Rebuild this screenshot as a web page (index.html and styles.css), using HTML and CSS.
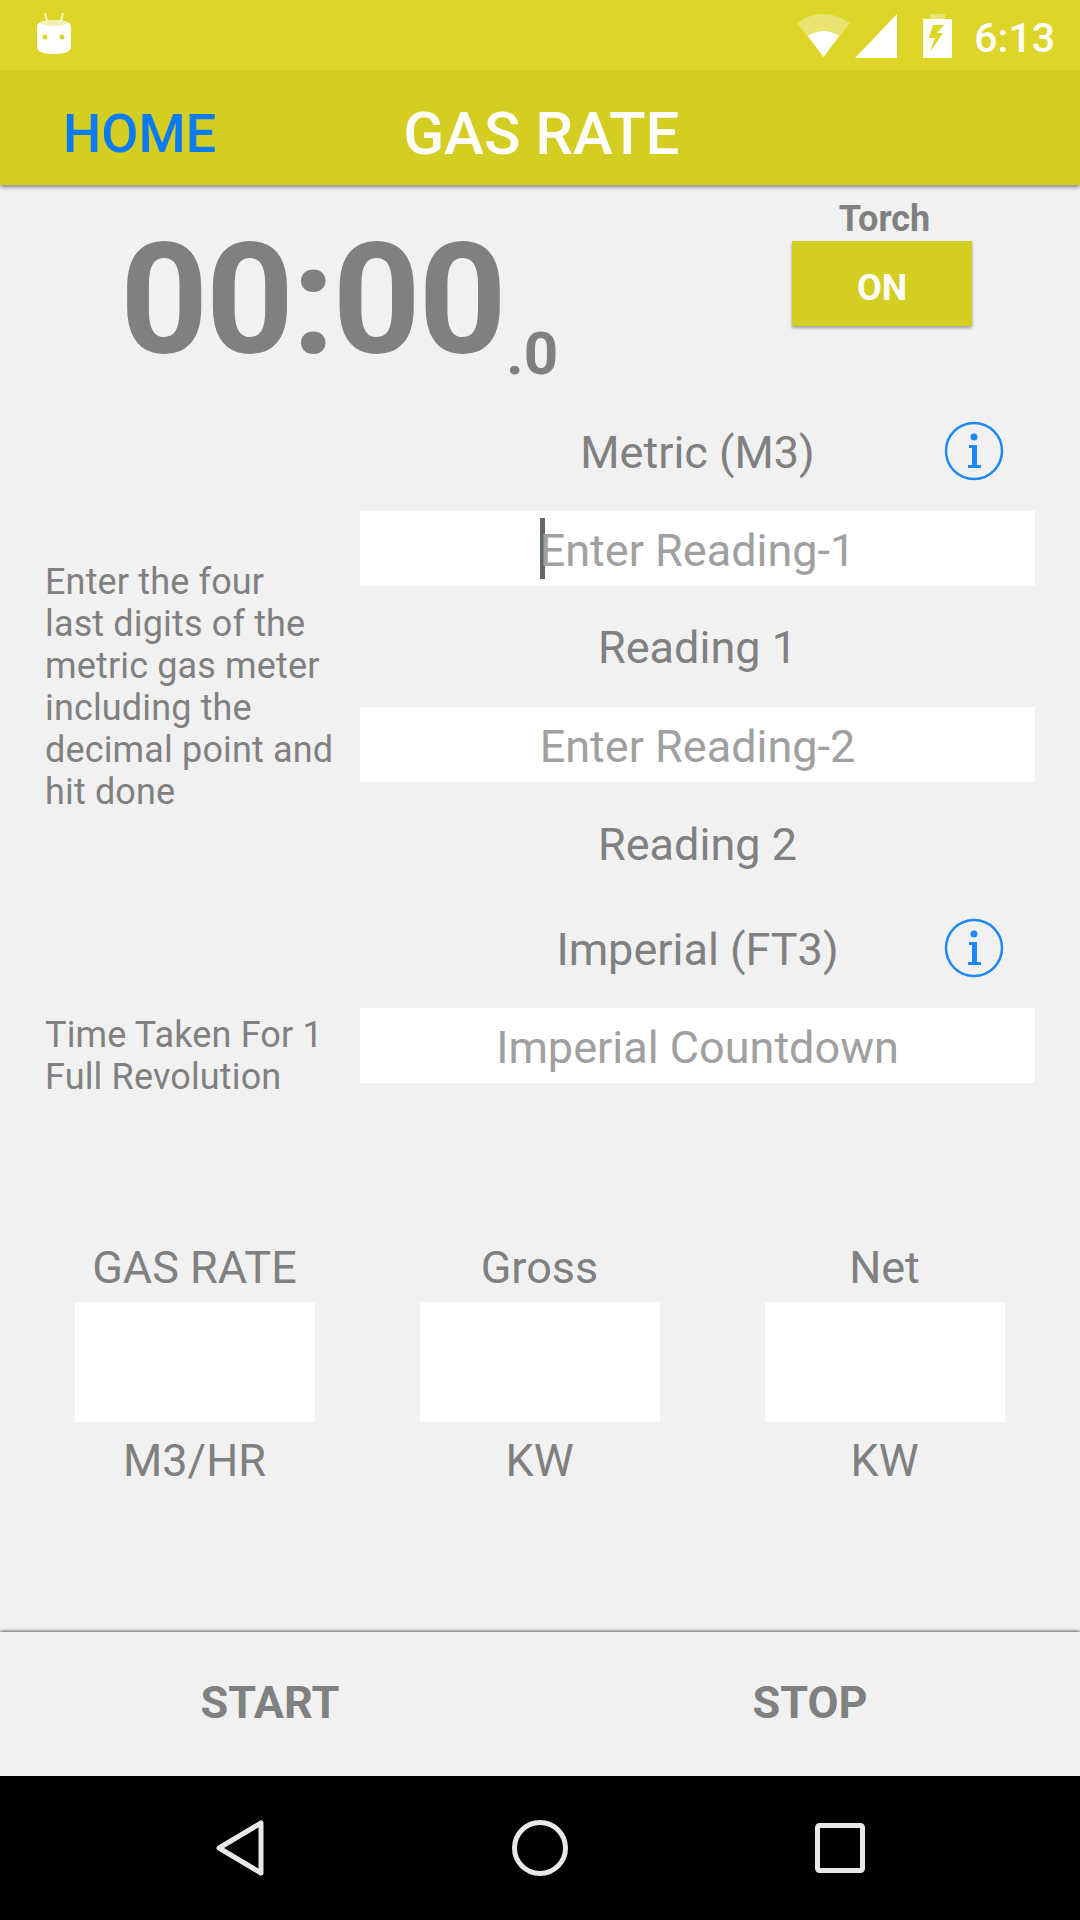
FILE: index.html
```html
<!DOCTYPE html>
<html lang="en">
<head>
    <meta charset="UTF-8">
    <meta name="viewport" content="width=device-width, initial-scale=1.0">
    <title>Gas Rate</title>
    <link rel="stylesheet" href="styles.css">
</head>
<body>

    <!-- Android status bar -->
    <div class="status-bar">
        <svg class="status-logo" width="34" height="42" viewBox="0 0 34 42">
            <path d="M10 8 L8 0 M24 8 L26 0" stroke="#f6f3c0" stroke-width="2" stroke-linecap="round"/>
            <path d="M0 14 Q0 7 17 7 Q34 7 34 14 V34 Q34 41 17 41 Q0 41 0 34 Z" fill="#fff"/>
            <path d="M3 10 Q8 7 17 7 Q26 7 31 10 Q26 13 17 13 Q8 13 3 10 Z" fill="#f3efb4"/>
            <circle cx="8" cy="24" r="2.5" fill="#ddd527"/>
            <circle cx="25" cy="24" r="2.5" fill="#ddd527"/>
        </svg>
        <div class="status-icons">
            <svg width="54" height="44" viewBox="0 0 54 44">
                <path d="M0 9 Q26.5 -9 53 9 L26.5 43 Z" fill="#fff" fill-opacity="0.35"/>
                <path d="M11 22 Q26.5 12 42 22 L26.5 43 Z" fill="#fff"/>
            </svg>
            <svg width="42" height="44" viewBox="0 0 42 44">
                <path d="M0 44 H42 V0 Z" fill="#fff"/>
            </svg>
            <svg class="status-battery" width="29" height="44" viewBox="0 0 29 44">
                <path d="M7 0 H22 V5 H7 Z" fill="#fff" fill-opacity="0.35"/>
                <path fill-rule="evenodd" d="M0 5 H29 V44 H0 Z M21 11 H10 L6 24 H12 L7 38 L20 19 H14 Z" fill="#fff"/>
            </svg>
            <div class="status-time">6:13</div>
        </div>
    </div>

    <div class="app-bar">
        <div class="home-link">HOME</div>
        <div class="app-title">GAS RATE</div>
    </div>

    <div class="content">
        <div class="timer-row">
            <div class="timer">00:00<span class="timer-tenths">.0</span></div>
            <div class="torch">
                <div class="torch-label">Torch</div>
                <div class="torch-button">ON</div>
            </div>
        </div>

        <div class="meter-section meter-metric">
            <div class="meter-note">Enter the four<br>last digits of the<br>metric gas meter<br>including the<br>decimal point and<br>hit done</div>
            <div class="meter-fields">
                <div class="meter-heading">
                    Metric (M3)
                    <svg class="info-icon" width="60" height="60" viewBox="0 0 60 60">
                        <circle cx="30" cy="30" r="28" fill="none" stroke="#1e88f5" stroke-width="2.5"/>
                        <circle cx="30" cy="16" r="3.5" fill="#1e88f5"/>
                        <path d="M25 24 H33 V44 H37 V47 H24 V44 H28 V27 H25 Z" fill="#1e88f5"/>
                    </svg>
                </div>
                <div class="meter-input has-cursor">Enter Reading-1</div>
                <div class="meter-label">Reading 1</div>
                <div class="meter-input">Enter Reading-2</div>
                <div class="meter-label meter-label-last">Reading 2</div>
            </div>
        </div>

        <div class="meter-section meter-imperial">
            <div class="meter-note">Time Taken For 1<br>Full Revolution</div>
            <div class="meter-fields">
                <div class="meter-heading">
                    Imperial (FT3)
                    <svg class="info-icon" width="60" height="60" viewBox="0 0 60 60">
                        <circle cx="30" cy="30" r="28" fill="none" stroke="#1e88f5" stroke-width="2.5"/>
                        <circle cx="30" cy="16" r="3.5" fill="#1e88f5"/>
                        <path d="M25 24 H33 V44 H37 V47 H24 V44 H28 V27 H25 Z" fill="#1e88f5"/>
                    </svg>
                </div>
                <div class="meter-input">Imperial Countdown</div>
            </div>
        </div>

        <div class="results">
            <div class="result">
                <div class="result-label">GAS RATE</div>
                <div class="result-box"></div>
                <div class="result-label">M3/HR</div>
            </div>
            <div class="result">
                <div class="result-label">Gross</div>
                <div class="result-box"></div>
                <div class="result-label">KW</div>
            </div>
            <div class="result">
                <div class="result-label">Net</div>
                <div class="result-box"></div>
                <div class="result-label">KW</div>
            </div>
        </div>
    </div>

    <div class="action-bar">
        <div class="action-button">START</div>
        <div class="action-button">STOP</div>
    </div>

    <!-- Android navigation bar -->
    <div class="nav-bar">
        <svg width="50" height="60" viewBox="0 0 50 60">
            <path d="M46 5 V55 L4 30 Z" fill="none" stroke="#e8e8e8" stroke-width="5" stroke-linejoin="round"/>
        </svg>
        <svg width="60" height="60" viewBox="0 0 60 60">
            <circle cx="30" cy="30" r="25.5" fill="none" stroke="#e8e8e8" stroke-width="5"/>
        </svg>
        <svg width="50" height="50" viewBox="0 0 50 50">
            <rect x="2.5" y="2.5" width="45" height="45" rx="2" fill="none" stroke="#e8e8e8" stroke-width="5"/>
        </svg>
    </div>

</body>
</html>
```
FILE: styles.css
```css
:root {
    --status-color: #ddd527;
    --bar-color: #d4cd22;
    --page-background: #f1f1f1;
    --text-gray: #808080;
    --hint-gray: #a0a0a0;
}

* {
    margin: 0;
    padding: 0;
    box-sizing: border-box;
}

body {
    font-family: Roboto, 'Liberation Sans', sans-serif;
    display: flex;
    flex-direction: column;
    width: 1080px;
    height: 1920px;
    overflow: hidden;
    background-color: var(--page-background);
    color: var(--text-gray);
}

/* Status bar */
.status-bar {
    display: flex;
    justify-content: space-between;
    align-items: flex-start;
    height: 72px;
    padding: 13px 25px 0 37px;
    background-color: var(--status-color);
}

.status-icons {
    display: flex;
    align-items: flex-start;
    gap: 4px;
    padding-top: 1px;
    color: #fff;
}

.status-battery {
    margin-left: 22px;
}

.status-time {
    margin-left: 18px;
    padding-top: 2px;
    font-size: 41px;
    font-weight: 500;
    line-height: 44px;
}

/* App bar */
.app-bar {
    display: flex;
    align-items: center;
    gap: 187px;
    height: 113px;
    padding: 10px 0 0 63px;
    background-color: var(--bar-color);
    box-shadow: 0 2px 4px rgba(0, 0, 0, 0.45);
    position: relative;
}

.home-link {
    font-size: 54px;
    font-weight: 500;
    color: #0a7bf2;
}

.app-title {
    font-size: 60px;
    font-weight: 500;
    color: #fff;
}

.content {
    flex-grow: 1;
}

/* Timer and torch */
.timer-row {
    display: flex;
    justify-content: space-between;
    height: 226px;
    padding: 0 108px 0 120px;
}

.timer {
    font-size: 154px;
    font-weight: 700;
    line-height: 156px;
    letter-spacing: -2.5px;
    padding-top: 38px;
}

.timer-tenths {
    font-size: 60px;
    line-height: 60px;
    letter-spacing: 0;
    margin-left: 2px;
    vertical-align: -21px;
}

.torch {
    display: flex;
    flex-direction: column;
    align-items: center;
    width: 180px;
}

.torch-label {
    padding: 12px 0 0 5px;
    font-size: 36px;
    font-weight: 700;
    line-height: 44px;
    height: 56px;
}

.torch-button {
    display: flex;
    justify-content: center;
    align-items: center;
    height: 85px;
    width: 100%;
    padding-top: 8px;
    font-size: 36px;
    font-weight: 700;
    color: #fff;
    background-color: var(--bar-color);
    box-shadow: 0 2px 3px rgba(0, 0, 0, 0.35);
}

/* Meter readings */
.meter-section {
    display: grid;
    grid-template-columns: 360px 675px;
}

.meter-note {
    padding-left: 45px;
    font-size: 36px;
    line-height: 42px;
    letter-spacing: 0.15px;
}

.meter-metric .meter-note {
    padding-top: 150px;
}

.meter-imperial .meter-note {
    padding-top: 109px;
}

.meter-heading {
    height: 100px;
    padding-bottom: 18px;
    display: flex;
    justify-content: center;
    align-items: center;
    font-size: 45px;
    position: relative;
}

.meter-imperial .meter-heading {
    height: 103px;
    padding-bottom: 15px;
}

.info-icon {
    position: absolute;
    right: 31px;
    top: 10px;
}

.meter-imperial .info-icon {
    top: 13px;
}

.meter-input {
    height: 75px;
    padding-top: 3px;
    display: flex;
    justify-content: center;
    align-items: center;
    font-size: 45px;
    color: var(--hint-gray);
    background-color: #fff;
}

.has-cursor::before {
    content: "";
    width: 5px;
    height: 61px;
    margin: -3px -5px 0 0;
    background-color: #666;
}

.meter-label {
    height: 121px;
    padding-top: 2px;
    display: flex;
    justify-content: center;
    align-items: center;
    font-size: 45px;
}

.meter-label-last {
    height: 123px;
}

/* Results */
.results {
    display: grid;
    grid-template-columns: repeat(3, 345px);
    padding: 132px 22px 0;
}

.result {
    display: flex;
    flex-direction: column;
    align-items: center;
}

.result-label {
    height: 72px;
    padding-top: 2px;
    font-size: 45px;
    line-height: 72px;
}

.result-box {
    width: 240px;
    height: 120px;
    margin-bottom: 1px;
    background-color: #fff;
}

/* Start and stop */
.action-bar {
    display: grid;
    grid-template-columns: 1fr 1fr;
    height: 144px;
    padding-bottom: 4px;
    box-shadow: 0 -1px 3px rgba(0, 0, 0, 0.6);
}

.action-button {
    display: flex;
    justify-content: center;
    align-items: center;
    font-size: 45px;
    font-weight: 700;
}

/* Navigation bar */
.nav-bar {
    display: grid;
    grid-template-columns: repeat(3, 300px);
    justify-items: center;
    align-items: center;
    height: 144px;
    padding: 0 90px;
    background-color: #000;
}
```
